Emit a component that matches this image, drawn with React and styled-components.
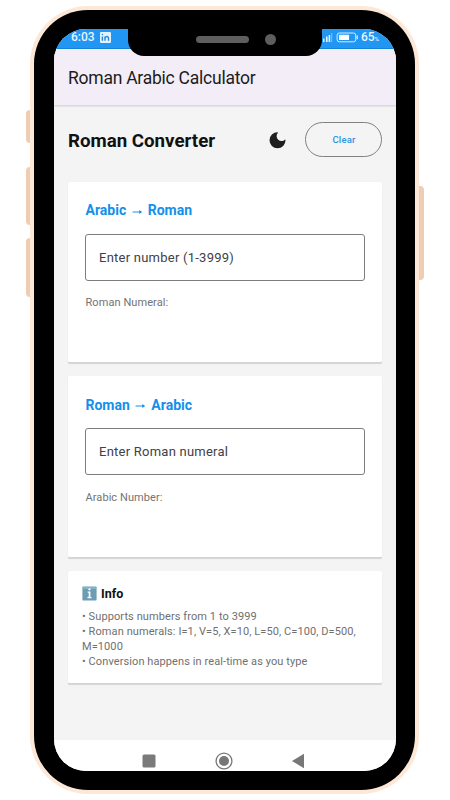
import { useState } from 'react';
import styled, { createGlobalStyle } from 'styled-components';

const CARDS = [
	{
		id: 'arabic',
		title: ['Arabic', 'Roman'],
		placeholder: 'Enter number (1-3999)',
		result: 'Roman Numeral:',
	},
	{
		id: 'roman',
		title: ['Roman', 'Arabic'],
		placeholder: 'Enter Roman numeral',
		result: 'Arabic Number:',
	},
];

const INFO = [
	'• Supports numbers from 1 to 3999',
	'• Roman numerals: I=1, V=5, X=10, L=50, C=100, D=500, M=1000',
	'• Conversion happens in real-time as you type',
].join('\n');

export default function App() {
	const [values, setValues] = useState({ arabic: '', roman: '' });

	return (
		<StyledPage>
			<GlobalStyle />
			<StyledPhone>
				<StyledSideButton $side='left' $top={104} $height={33} />
				<StyledSideButton $side='left' $top={161} $height={58} />
				<StyledSideButton $side='left' $top={232} $height={59} />
				<StyledSideButton $side='right' $top={180} $height={94} />
				<StyledBezel>
					<StyledNotch>
						<i className='speaker' />
						<i className='camera' />
					</StyledNotch>
					<StyledScreen>
						<StatusBar />
						<StyledAppBar>Roman Arabic Calculator</StyledAppBar>
						<StyledMain>
							<StyledHeader>
								<h1>Roman Converter</h1>
								<IconMoon />
								<StyledClearButton
									type='button'
									onClick={() => setValues({ arabic: '', roman: '' })}
								>
									Clear
								</StyledClearButton>
							</StyledHeader>
							{CARDS.map(({ id, title, placeholder, result }) => (
								<StyledConverter key={id}>
									<h2>
										{title[0]}
										<IconArrow />
										{title[1]}
									</h2>
									<input
										value={values[id]}
										placeholder={placeholder}
										onChange={(e) =>
											setValues({ ...values, [id]: e.target.value })
										}
									/>
									<p>{result}</p>
								</StyledConverter>
							))}
							<StyledInfo>
								<h3>
									<IconInfo />
									Info
								</h3>
								<p>{INFO}</p>
							</StyledInfo>
						</StyledMain>
						<NavigationBar />
					</StyledScreen>
				</StyledBezel>
			</StyledPhone>
		</StyledPage>
	);
}

function StatusBar() {
	return (
		<StyledStatusBar>
			<span className='left'>
				6:03
				<svg width='11' height='11' viewBox='0 0 11 11'>
					<rect width='11' height='11' rx='1' fill='#e3f2fd' />
					<path
						d='M2.4 4.4v4.4M5 8.8V4.4M5 6.3c.3-2.4 3.5-2.5 3.5 0v2.5'
						fill='none'
						stroke='#2788d8'
						strokeWidth='1.4'
					/>
					<circle cx='2.4' cy='2.5' r='.8' fill='#2788d8' />
				</svg>
			</span>
			<span className='right'>
				<svg width='36' height='11' viewBox='0 0 36 11'>
					<path d='M0 6.5h1.5V10H0zM3 4.5h1.6V10H3zM5.6 3h1.6v7H5.6z' fill='#e3f2fd' />
					<path d='M8.2 1h1v9h-1z' fill='#7fc2f7' />
					<rect x='14.1' y='1' width='18.6' height='8.8' rx='2.2' fill='none' stroke='#d8ecfc' />
					<rect x='16' y='2.7' width='10' height='5.4' rx='.5' fill='#fff' />
					<path d='M34.2 3.6v3.6' stroke='#d8ecfc' strokeWidth='1.4' />
				</svg>
				<b>65</b>
				<small>%</small>
			</span>
		</StyledStatusBar>
	);
}

function NavigationBar() {
	return (
		<StyledNavigationBar>
			<svg width='14' height='18' viewBox='0 0 14 18'>
				<rect x='.5' y='2.5' width='13' height='13' rx='1.5' fill='#7a7a7a' />
			</svg>
			<svg width='18' height='18' viewBox='0 0 18 18'>
				<circle cx='9' cy='9' r='7.9' fill='none' stroke='#777' strokeWidth='1.3' />
				<circle cx='9' cy='9' r='5' fill='#777' />
			</svg>
			<svg width='12' height='18' viewBox='0 0 12 18'>
				<path d='M0 9 12 1.8v14.4z' fill='#777' />
			</svg>
		</StyledNavigationBar>
	);
}

function IconMoon() {
	return (
		<svg width='17' height='17' viewBox='0 0 17 17'>
			<path
				d='M8.6.3A8 8 0 1 0 16.5 8.2q-.1-.7-.5-.8A4.4 4.4 0 0 1 8.8 1.1Q9.2.4 8.6.3Z'
				fill='#1f1f21'
			/>
		</svg>
	);
}

function IconArrow() {
	return (
		<svg width='11' height='8' viewBox='0 0 11 8'>
			<path d='M.6 4h8' stroke='currentColor' strokeWidth='1' />
			<path d='M7.3 1.9 10.2 4 7.3 6.1z' fill='currentColor' />
		</svg>
	);
}

function IconInfo() {
	return (
		<svg width='15' height='15' viewBox='0 0 15 15'>
			<rect x='.4' y='.4' width='14.2' height='14.2' rx='.8' fill='#6c9db3' />
			<path d='M1 1h13v2H1z' fill='#83b3c6' />
			<circle cx='7.5' cy='3.3' r='1.15' fill='#fff' />
			<path d='M5.7 5.5h2.7v5.6h1.1v1.2h-4v-1.2h1.2V6.7h-1z' fill='#fff' />
		</svg>
	);
}

const GlobalStyle = createGlobalStyle`
	* {
		box-sizing: border-box;
	}
	body {
		margin: 0;
		background: #fff;
		font-family: Roboto, sans-serif;
	}
	h1, h2, h3, p {
		margin: 0;
	}
`;
const StyledPage = styled.div`
	height: 800px;
	padding: 6px 31px 6.5px 30px;
	overflow: hidden;
`;
const StyledPhone = styled.div`
	position: relative;
	height: 787.5px;
	padding: 4px;
	border-radius: 58px;
	background: #fde8d7;
`;
const StyledSideButton = styled.i`
	position: absolute;
	${({ $side }) => $side}: ${({ $side }) => ($side === 'left' ? -4 : -5)}px;
	top: ${({ $top }) => $top}px;
	width: ${({ $side }) => ($side === 'left' ? 4 : 5)}px;
	height: ${({ $height }) => $height}px;
	border-radius: ${({ $side }) =>
		$side === 'left' ? '4px 0 0 4px' : '0 4px 4px 0'};
	background: #edceb5;
`;
const StyledBezel = styled.div`
	position: relative;
	height: 100%;
	padding: 19px 19px 18.5px 20px;
	border-radius: 54px;
	background: #000;
`;
const StyledNotch = styled.div`
	position: absolute;
	z-index: 1;
	top: 10px;
	left: 94px;
	width: 194px;
	height: 36px;
	border-radius: 0 0 16px 16px;
	background: #000;
	display: flex;
	align-items: center;
	padding: 3px 0 0 68px;
	column-gap: 16px;
	.speaker {
		width: 53px;
		height: 7px;
		border-radius: 4px;
		background: #5e5e5e;
	}
	.camera {
		width: 11px;
		height: 11px;
		border-radius: 50%;
		background: #5e5e5e;
	}
`;
const StyledScreen = styled.div`
	display: flex;
	flex-direction: column;
	height: 100%;
	overflow: hidden;
	border-radius: 32px;
	background: #f4f4f4;
`;
const StyledStatusBar = styled.div`
	display: flex;
	justify-content: space-between;
	height: 20px;
	padding: 2px 17px 0;
	border-bottom: 1px solid #1483dc;
	background: #2196f3;
	color: #e9f5fe;
	font-size: 12px;
	font-weight: 500;
	line-height: 13px;
	span {
		display: flex;
		height: 13px;
	}
	.left {
		column-gap: 5px;
		align-items: center;
	}
	.right {
		align-items: center;
		b {
			margin-left: 1.5px;
			font-weight: 500;
		}
		small {
			margin-top: 2px;
			font-size: 6px;
		}
	}
`;
const StyledAppBar = styled.div`
	height: 57px;
	padding-left: 14px;
	border-bottom: 1px solid #dcd8df;
	background: #f3edf7;
	box-shadow: 0 1px 1px #e6e5e7;
	color: #1d1b20;
	font-size: 17.5px;
	line-height: 58px;
	letter-spacing: -0.24px;
`;
const StyledMain = styled.main`
	flex: 1;
	padding: 16px 14px 0;
`;
const StyledHeader = styled.div`
	display: flex;
	align-items: center;
	height: 36px;
	margin-bottom: 23.5px;
	h1 {
		flex: 1;
		padding-top: 2px;
		color: #111;
		font-size: 18.7px;
		font-weight: 700;
	}
	svg {
		margin-right: 19px;
	}
`;
const StyledClearButton = styled.button`
	width: 77px;
	height: 35px;
	margin-top: -0.5px;
	padding: 0 0 0 1px;
	border: 1px solid #818085;
	border-radius: 18px;
	background: transparent;
	color: #2995e2;
	font: 500 9.5px Roboto, sans-serif;
	letter-spacing: 0.15px;
`;
const StyledCard = styled.section`
	margin-bottom: 14px;
	border-radius: 1.5px;
	background: #fff;
	box-shadow: 0 1.5px 1px #d4d4d4, 0 0 1px #e6e6e6;
`;
const StyledConverter = styled(StyledCard)`
	height: 180.5px;
	padding: 17.5px 17.5px 0 17px;
	h2 {
		display: flex;
		align-items: center;
		height: 22px;
		padding-left: 0.5px;
		color: #1490eb;
		font-size: 14px;
		font-weight: 700;
	}
	h2 svg {
		margin: 3px 5px 0 5.5px;
	}
	input {
		display: block;
		width: 100%;
		height: 47px;
		margin-top: 12.5px;
		padding: 0 13px;
		border: 1px solid #7d7c80;
		border-radius: 3px;
		outline: none;
		background: #fff;
		color: #424046;
		font: 13px Roboto, sans-serif;
		letter-spacing: 0.24px;
		&::placeholder {
			color: #424046;
		}
	}
	p {
		margin-top: 15.5px;
		padding-left: 0.5px;
		color: #737373;
		font-size: 11px;
		line-height: 14px;
		letter-spacing: 0.07px;
	}
`;
const StyledInfo = styled(StyledCard)`
	height: 112px;
	padding: 14px 14px 0;
	h3 {
		display: flex;
		align-items: center;
		column-gap: 4px;
		height: 18px;
		margin-bottom: 6px;
		color: #111;
		font-size: 12.5px;
		font-weight: 700;
	}
	p {
		color: #707070;
		font-size: 11px;
		line-height: 15px;
		letter-spacing: 0.09px;
		white-space: pre-line;
	}
`;
const StyledNavigationBar = styled.nav`
	display: flex;
	align-items: center;
	height: 31px;
	padding: 11px 0 0 88px;
	background: #fff;
	svg:nth-child(2) {
		margin: 0 59px 0 58.5px;
	}
`;
